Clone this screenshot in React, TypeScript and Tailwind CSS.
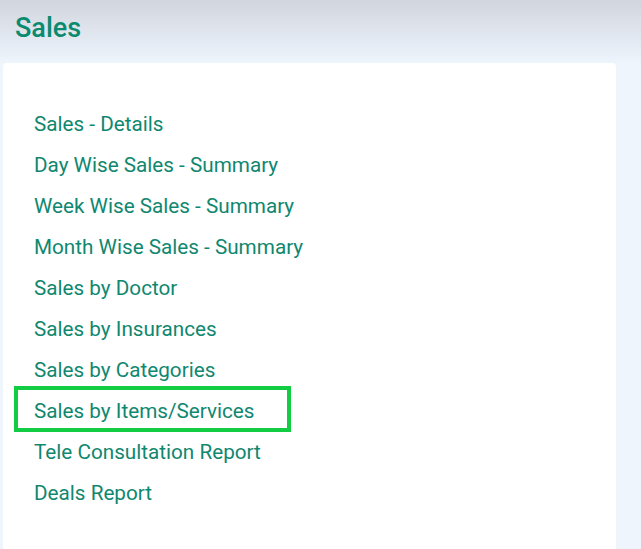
export default function App() {
  const reports = [
    "Sales - Details",
    "Day Wise Sales - Summary",
    "Week Wise Sales - Summary",
    "Month Wise Sales - Summary",
    "Sales by Doctor",
    "Sales by Insurances",
    "Sales by Categories",
    "Sales by Items/Services",
    "Tele Consultation Report",
    "Deals Report",
  ];

  return (
    <div
      className="h-[549px] w-[641px] overflow-hidden bg-[#eef5fd]"
      style={{ fontFamily: "Roboto, 'Noto Sans', sans-serif" }}
    >
      <div className="bg-gradient-to-b from-[#d1d5de] to-[#eef5fd] h-[63px] pl-[15px] pt-[12px]">
        <h1 className="text-[27px] font-medium leading-[32px] text-[#0a8a6e]">Sales</h1>
      </div>
      <div className="ml-[3px] w-[613px] h-[486px] rounded-t-[4px] bg-white pt-[41px]">
        <ul className="flex flex-col">
          {reports.map((r) => (
            <li key={r} className="h-[41px] flex items-center pl-[11px]">
              {r === "Sales by Items/Services" ? (
                <span className="w-[277px] h-[46px] border-[4px] border-[#12cc44] pl-[16px] pt-[6px] flex items-center -translate-y-[3px]">
                  <a className="text-[20.7px] text-[#10876f] cursor-pointer">{r}</a>
                </span>
              ) : (
                <span className="pl-[20px]">
                  <a className="text-[20.7px] text-[#10876f] cursor-pointer">{r}</a>
                </span>
              )}
            </li>
          ))}
        </ul>
      </div>
    </div>
  );
}
